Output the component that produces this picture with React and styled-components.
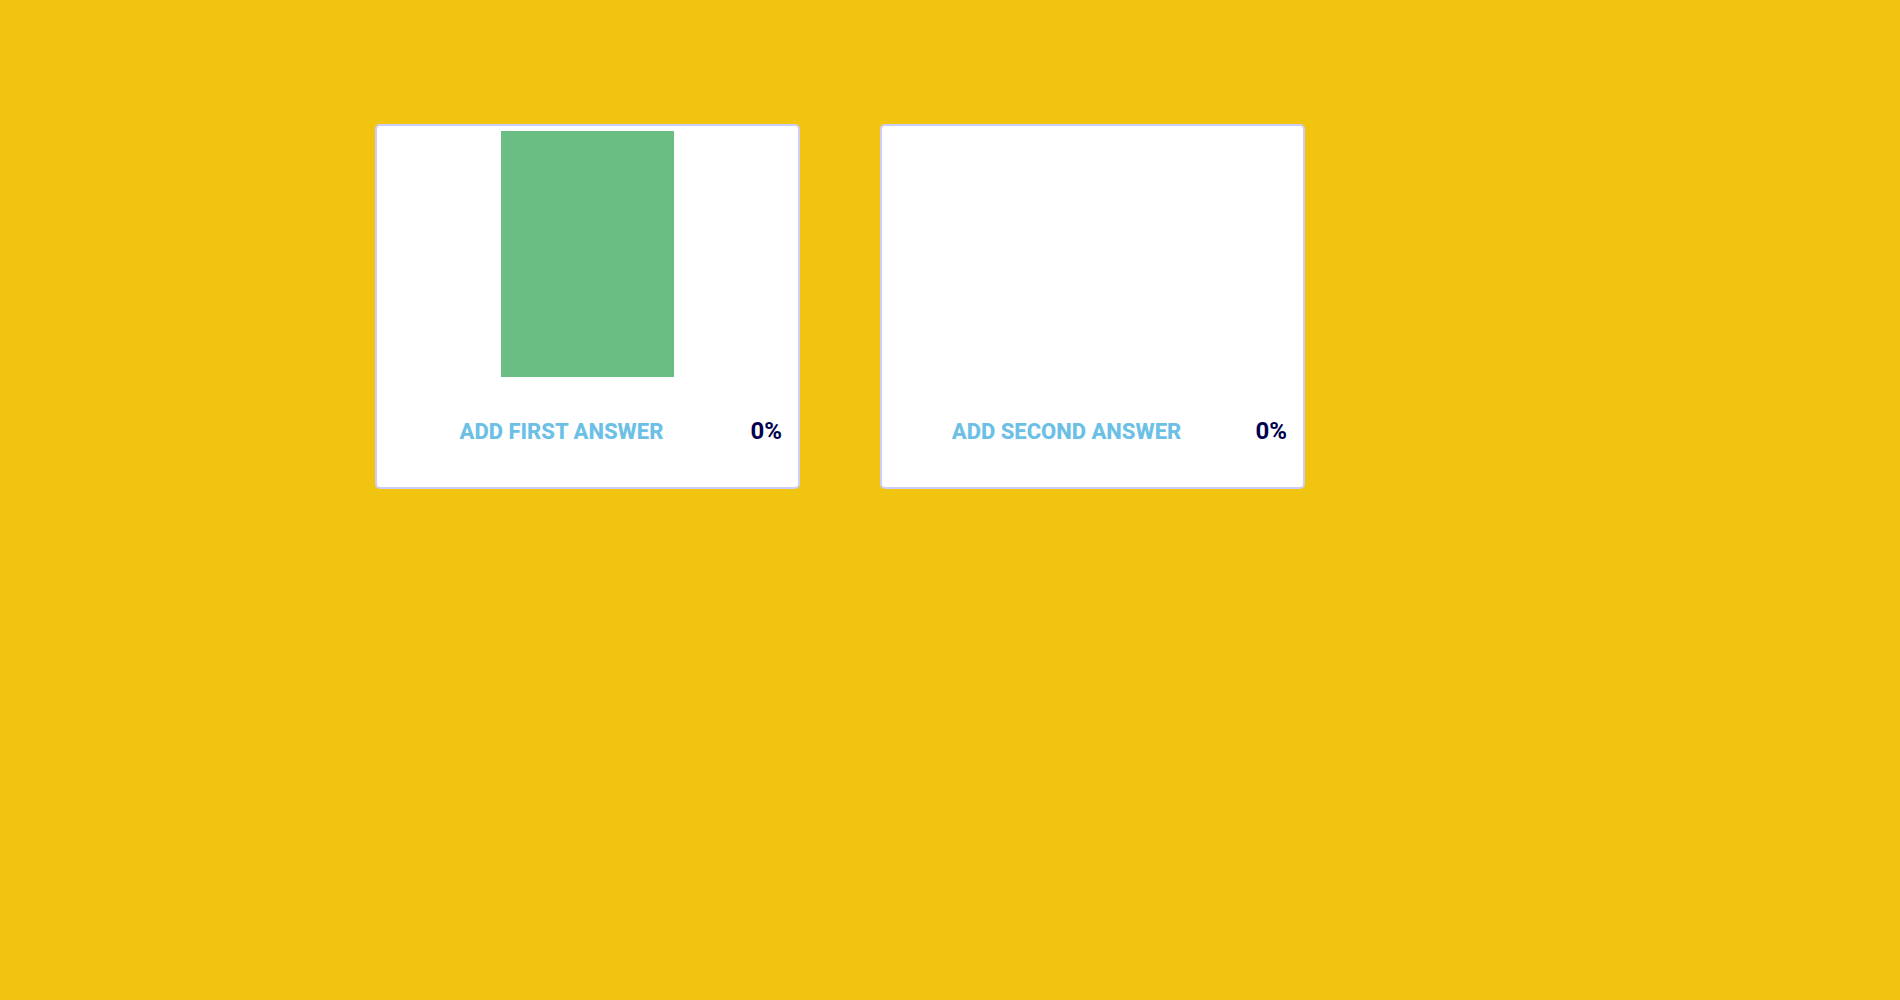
import React from "react";
import styled, { createGlobalStyle } from "styled-components";

const GlobalStyle = createGlobalStyle`
  * {
    box-sizing: border-box;
  }
  body {
    margin: 0;
    background: #f1c40f;
    font-family: Roboto, "Liberation Sans", sans-serif;
  }
`;

const Poll = styled.main`
  display: flex;
  gap: 80px;
  padding: 124px 80px 80px 375px;
`;

const Card = styled.section`
  display: flex;
  flex-direction: column;
  flex: 0 1 425px;
  min-width: 0;
  padding-top: 5px;
  border: 2px solid #ccccff;
  border-radius: 5px;
  background: #ffffff;
`;

const Chart = styled.div`
  display: flex;
  justify-content: center;
  height: 246px;
`;

const Bar = styled.div`
  width: 41%;
  background: ${({ $color }) => $color};
`;

const AnswerRow = styled.div`
  display: flex;
  align-items: center;
  height: 108px;
  margin-bottom: 2px;
  padding-right: 16px;
  color: #00004d;
  font-size: 24px;
  font-weight: 700;
`;

const AnswerInput = styled.input`
  flex: 1;
  min-width: 0;
  height: 40px;
  padding: 0;
  border: 0;
  background: transparent;
  color: inherit;
  font: inherit;
  font-size: 22px;
  font-weight: 800;
  text-align: center;

  &::placeholder {
    color: #6cc0e5;
    opacity: 1;
  }
`;

const Percent = styled.output`
  min-width: 36px;
  text-align: right;
`;

const answers = [
  { id: "first", placeholder: "ADD FIRST ANSWER", color: "#6bbe83", percent: 0 },
  { id: "second", placeholder: "ADD SECOND ANSWER", color: "transparent", percent: 0 },
];

export default function App() {
  return (
    <>
      <GlobalStyle />
      <Poll>
        {answers.map(({ id, placeholder, color, percent }) => (
          <Card key={id}>
            <Chart>
              <Bar $color={color} />
            </Chart>
            <AnswerRow>
              <AnswerInput id={id} aria-label={placeholder} placeholder={placeholder} />
              <Percent htmlFor={id}>{percent}%</Percent>
            </AnswerRow>
          </Card>
        ))}
      </Poll>
    </>
  );
}
